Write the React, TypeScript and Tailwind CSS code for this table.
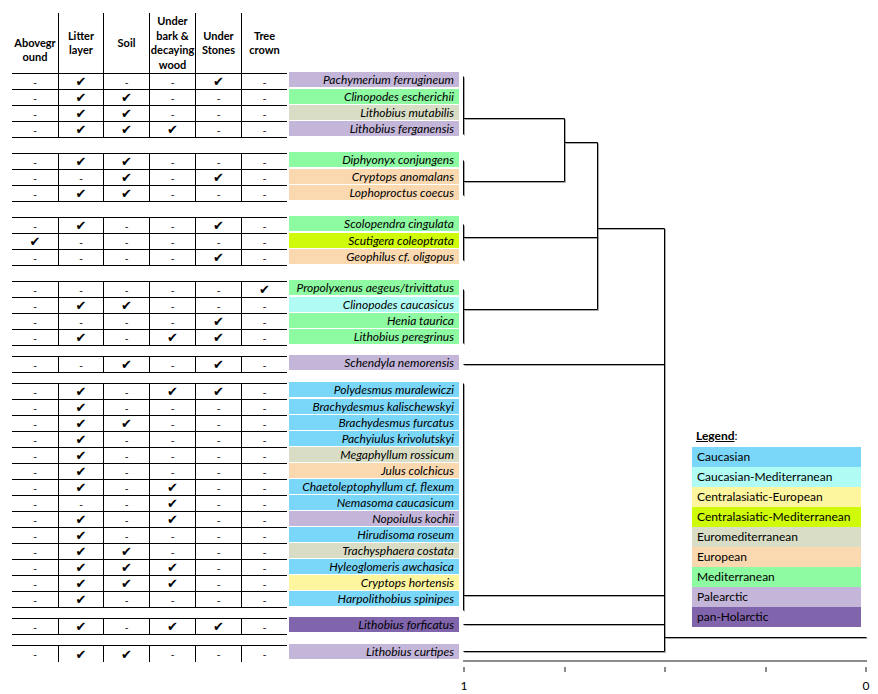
import React from "react";

type Key = "cau" | "cauMed" | "caEu" | "caMed" | "euromed" | "eu" | "med" | "pal" | "hol";

const BG: Record<Key, string> = {
  cau: "bg-[#7AD7FA]",
  cauMed: "bg-[#B0FBF4]",
  caEu: "bg-[#FEF69E]",
  caMed: "bg-[#CFFA0A]",
  euromed: "bg-[#D9DDC5]",
  eu: "bg-[#FAD9B1]",
  med: "bg-[#8EFAA2]",
  pal: "bg-[#C4B6D9]",
  hol: "bg-[#8064AC]",
};

type Row = [string, Key, string];

const groups: { gap: string; rows: Row[] }[] = [
  {
    gap: "h-0",
    rows: [
      ["Pachymerium ferrugineum", "pal", "-x--x-"],
      ["Clinopodes escherichii", "med", "-xx---"],
      ["Lithobius mutabilis", "euromed", "-xx---"],
      ["Lithobius ferganensis", "pal", "-xxx--"],
    ],
  },
  {
    gap: "h-[15px]",
    rows: [
      ["Diphyonyx conjungens", "med", "-xx---"],
      ["Cryptops anomalans", "eu", "--x-x-"],
      ["Lophoproctus coecus", "eu", "-xx---"],
    ],
  },
  {
    gap: "h-[15px]",
    rows: [
      ["Scolopendra cingulata", "med", "-x--x-"],
      ["Scutigera coleoptrata", "caMed", "x-----"],
      ["Geophilus cf. oligopus", "eu", "----x-"],
    ],
  },
  {
    gap: "h-[15px]",
    rows: [
      ["Propolyxenus aegeus/trivittatus", "med", "-----x"],
      ["Clinopodes caucasicus", "cauMed", "-xx---"],
      ["Henia taurica", "med", "----x-"],
      ["Lithobius peregrinus", "med", "-x-xx-"],
    ],
  },
  { gap: "h-[10px]", rows: [["Schendyla nemorensis", "pal", "--x-x-"]] },
  {
    gap: "h-[10px]",
    rows: [
      ["Polydesmus muralewiczi", "cau", "-x-xx-"],
      ["Brachydesmus kalischewskyi", "cau", "-x----"],
      ["Brachydesmus furcatus", "cau", "-xx---"],
      ["Pachyiulus krivolutskyi", "cau", "-x----"],
      ["Megaphyllum rossicum", "euromed", "-x----"],
      ["Julus colchicus", "eu", "-x----"],
      ["Chaetoleptophyllum cf. flexum", "cau", "-x-x--"],
      ["Nemasoma caucasicum", "cau", "---x--"],
      ["Nopoiulus kochii", "pal", "-x-x--"],
      ["Hirudisoma roseum", "cau", "-x----"],
      ["Trachysphaera costata", "euromed", "-xx---"],
      ["Hyleoglomeris awchasica", "cau", "-xxx--"],
      ["Cryptops hortensis", "caEu", "-xxx--"],
      ["Harpolithobius spinipes", "cau", "-x----"],
    ],
  },
  { gap: "h-[10px]", rows: [["Lithobius forficatus", "hol", "-x-xx-"]] },
  { gap: "h-[10px]", rows: [["Lithobius curtipes", "pal", "-xx---"]] },
];

const colW = ["w-[46px]", "w-[45px]", "w-[46px]", "w-[46px]", "w-[46px]", "w-[46px]"];

const legend: [string, Key][] = [
  ["Caucasian", "cau"],
  ["Caucasian-Mediterranean", "cauMed"],
  ["Centralasiatic-European", "caEu"],
  ["Centralasiatic-Mediterranean", "caMed"],
  ["Euromediterranean", "euromed"],
  ["European", "eu"],
  ["Mediterranean", "med"],
  ["Palearctic", "pal"],
  ["pan-Holarctic", "hol"],
];

const OX = 459;
const segs: [number, number, number, number][] = [
  [463, 76, 463, 134],
  [463, 118, 564, 118],
  [463, 160, 463, 195],
  [463, 181, 564, 181],
  [564, 118, 564, 181],
  [564, 142, 597, 142],
  [463, 224, 463, 260],
  [463, 237, 597, 237],
  [463, 289, 463, 343],
  [463, 309, 597, 309],
  [597, 142, 597, 309],
  [597, 228, 664, 228],
  [463, 364, 664, 364],
  [463, 383, 463, 610],
  [463, 595, 664, 595],
  [463, 624, 664, 624],
  [463, 651, 664, 651],
  [664, 228, 664, 651],
  [664, 637, 866, 637],
];

function Cell({ v, i }: { v: string; i: number }) {
  return (
    <div className={`${colW[i]} ${i > 0 ? "border-l border-black" : ""} flex items-center justify-center`}>
      {v === "x" ? (
        <span className="font-['DejaVu_Sans',sans-serif] text-[13px] leading-none text-black">✔</span>
      ) : (
        <span className="text-[10px] leading-none text-[#333] font-bold">-</span>
      )}
    </div>
  );
}

function Header() {
  const heads: { lines: string[]; extra?: string }[] = [
    { lines: ["Abovegr", "ound"], extra: "pt-[14px]" },
    { lines: ["Litter", "layer"] },
    { lines: ["Soil"] },
    { lines: ["Under", "bark &", "decaying", "wood"] },
    { lines: ["Under", "Stones"] },
    { lines: ["Tree", "crown"] },
  ];
  return (
    <div className="h-[73px] pt-[13px] pl-[12px] flex">
      {heads.map((h, i) => (
        <div
          key={i}
          className={`${colW[i]} h-[60px] ${i > 0 ? "border-l border-black" : ""} flex flex-col items-center justify-center text-center ${h.extra ?? ""}`}
        >
          {h.lines.map((l, j) => (
            <div key={j} className="text-[11px] font-bold leading-[14.5px] text-black whitespace-nowrap">
              {l}
            </div>
          ))}
        </div>
      ))}
    </div>
  );
}

export default function App() {
  return (
    <div className="w-[878px] h-[694px] bg-white flex font-['Lato','Open_Sans',sans-serif] overflow-hidden">
      <div className="w-[459px] flex flex-col">
        <Header />
        {groups.map((g, gi) => (
          <div key={gi} className="flex flex-col">
            <div className={g.gap} />
            {g.rows.map((r, ri) => {
              const first = ri === 0;
              const lastRow = gi === groups.length - 1 && ri === g.rows.length - 1;
              return (
                <div key={ri} className="flex items-start">
                  <div
                    className={`ml-[12px] w-[275px] flex ${first ? "h-[17px] border-t" : "h-[16px]"} ${lastRow ? "" : "border-b"} border-black`}
                  >
                    {r[2].split("").map((v, ci) => (
                      <Cell key={ci} v={v} i={ci} />
                    ))}
                  </div>
                  <div
                    className={`ml-[2px] -mt-[1px] w-[170px] h-[15px] ${BG[r[1]]} flex items-center justify-end pr-[5px]`}
                  >
                    <span className="italic text-[12px] leading-none text-black whitespace-nowrap">{r[0]}</span>
                  </div>
                </div>
              );
            })}
          </div>
        ))}
      </div>
      <div className="relative flex-1 h-[694px]">
        <svg width={419} height={694} className="block">
          {segs.map(([x1, y1, x2, y2], i) => (
            <line
              key={`s${i}`}
              x1={x1 - OX + 1.5}
              y1={y1 + 1.5}
              x2={x2 - OX + 1.5}
              y2={y2 + 1.5}
              stroke="#a6a6a6"
              strokeWidth={1}
            />
          ))}
          {segs.map(([x1, y1, x2, y2], i) => (
            <line
              key={`b${i}`}
              x1={x1 - OX + 0.5}
              y1={y1 + 0.5}
              x2={x2 - OX + 0.5}
              y2={y2 + 0.5}
              stroke="#000"
              strokeWidth={1}
            />
          ))}
          <rect x={463 - OX} y={660} width={404} height={2} fill="#8c8c8c" />
          {[463, 564, 664, 765, 865].map((x) => (
            <rect key={x} x={x - OX} y={667} width={2} height={5} fill="#8c8c8c" />
          ))}
          <text x={463 - OX + 1} y={690} fontSize={12} textAnchor="middle" fill="#000" fontFamily="Lato, sans-serif">
            1
          </text>
          <text x={865 - OX + 1} y={690} fontSize={12} textAnchor="middle" fill="#000" fontFamily="Lato, sans-serif">
            0
          </text>
        </svg>
        <div className="absolute left-[233px] top-[428px] flex flex-col">
          <div className="h-[19px] pl-[4px] text-[12px] leading-[16px] text-black">
            <span className="font-bold underline">Legend</span>:
          </div>
          {legend.map(([t, k]) => (
            <div key={t} className={`w-[169px] h-[20px] ${BG[k]} flex items-center pl-[5px]`}>
              <span className="text-[12px] leading-none text-black whitespace-nowrap">{t}</span>
            </div>
          ))}
        </div>
      </div>
    </div>
  );
}
